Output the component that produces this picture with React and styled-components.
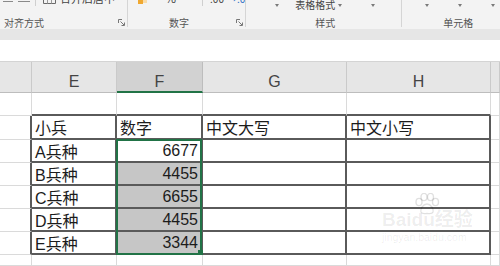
import React from 'react';
import styled, { createGlobalStyle } from 'styled-components';

const GlobalStyle = createGlobalStyle`
  html, body { margin: 0; padding: 0; background: #fff; }
  body { font-family: "Liberation Sans", "Noto Sans CJK SC", sans-serif; }
  #root { width: 500px; height: 266px; }
`;

const COLS = '32px 85px 86px 144px 144px 9px';
const GREEN = '#217346';
const DARK = '2px solid #5a5a5a';
const LIGHT = '1px solid #dadada';

const Page = styled.div`
  position: relative;
  width: 500px;
  height: 266px;
  overflow: hidden;
  display: flex;
  flex-direction: column;
  background: #fff;
`;

/* ---------- ribbon ---------- */
const Ribbon = styled.div`
  flex: 0 0 29px;
  display: flex;
  background: #f3f3f3;
  overflow: hidden;
`;

const Group = styled.div`
  flex: 0 0 ${p => p.$w}px;
  box-sizing: border-box;
  height: 27px;
  border-right: ${p => (p.$sep ? '1px solid #d5d5d5' : 'none')};
  display: flex;
  flex-direction: column;
`;

const TopRow = styled.div`
  flex: 0 0 12px;
  display: flex;
  align-items: flex-start;
  overflow: hidden;
  color: #444;
  font-family: "Noto Sans CJK SC", sans-serif;
`;

const Dash = styled.div`
  flex: 0 0 ${p => p.$w}px;
  height: 1px;
  margin: 1px 0 0 ${p => p.$ml}px;
  background: #8a8a8a;
`;

const VSep = styled.div`
  flex: 0 0 1px;
  height: 6px;
  margin-left: ${p => p.$ml}px;
  background: #cfcfcf;
`;

const Glyph = styled.svg`
  flex: 0 0 auto;
  margin: ${p => p.$mt || 0}px 0 0 ${p => p.$ml}px;
`;

const CutText = styled.span`
  flex: 0 0 auto;
  display: flex;
  align-items: center;
  gap: 3px;
  margin: ${p => p.$mt}px 0 0 ${p => p.$ml}px;
  font-size: ${p => p.$fs || 10}px;
  line-height: 12px;
  white-space: nowrap;
  color: #444;
`;

const Blue = styled.span`
  color: #2e6fc4;
`;

const Caret = styled.span`
  flex: 0 0 auto;
  width: 0;
  height: 0;
  margin: ${p => p.$mt ?? 4}px 0 0 ${p => p.$ml || 0}px;
  border-left: 2.5px solid transparent;
  border-right: 2.5px solid transparent;
  border-top: 3px solid #7a7a7a;
`;

const LabelRow = styled.div`
  flex: 1;
  display: flex;
  align-items: center;
  padding: 3px 2px 0 ${p => p.$pl}px;
  font-family: "Noto Sans CJK SC", sans-serif;
  font-size: 10px;
  color: #555;
  white-space: nowrap;
`;

const Launcher = styled.svg`
  margin-left: auto;
  flex: 0 0 auto;
`;

const LauncherIcon = () => (
  <Launcher width="7" height="7" viewBox="0 0 7 7">
    <path d="M0.5 4 V0.5 H4" fill="none" stroke="#777" strokeWidth="1" />
    <path d="M2.5 2.5 L6 6" stroke="#777" strokeWidth="1" />
    <path d="M3.5 6.5 H6.5 V3.5" fill="none" stroke="#777" strokeWidth="1" />
  </Launcher>
);

const Band = styled.div`
  flex: 0 0 11px;
  background: #e6e6e6;
`;

const FormulaBar = styled.div`
  flex: 0 0 21px;
  background: #fff;
  border-bottom: 1px solid #d4d4d4;
`;

/* ---------- sheet ---------- */
const HeaderRow = styled.div`
  flex: 0 0 30px;
  display: grid;
  grid-template-columns: ${COLS};
`;

const HeadCell = styled.div`
  box-sizing: border-box;
  background: ${p => (p.$sel ? '#d2d2d2' : '#e6e6e6')};
  border-right: 1px solid ${p => (p.$sel ? '#bdbdbd' : '#cacaca')};
  border-bottom: ${p => (p.$sel ? `2px solid ${GREEN}` : '1px solid #bdbdbd')};
  display: flex;
  justify-content: center;
  padding-top: 11px;
  font-size: 16px;
  line-height: 18px;
  color: #444;
  overflow: hidden;
`;

const Sheet = styled.div`
  flex: 1;
  display: grid;
  grid-template-columns: ${COLS};
  grid-template-rows: 23px 24px 23px 23px 23px 23px 23px 1fr;
`;

const Cell = styled.div`
  grid-row: ${p => p.$r};
  grid-column: ${p => p.$c};
  box-sizing: border-box;
  border-right: ${p => (p.$rDark ? DARK : LIGHT)};
  border-bottom: ${p => (p.$bDark ? DARK : LIGHT)};
  background: ${p => (p.$sel ? '#c6c6c6' : '#fff')};
  display: flex;
  align-items: center;
  justify-content: ${p => (p.$num ? 'flex-end' : 'flex-start')};
  padding: ${p => (p.$num ? '0 3px 0 0' : '0 0 0 3px')};
  font-size: 16px;
  color: #1c1c1c;
  white-space: nowrap;
  overflow: hidden;
`;

const Selection = styled.div`
  grid-row: 3 / 8;
  grid-column: 3;
  margin: -1px 1px 0 -1px;
  border: 2px solid ${GREEN};
  position: relative;
  z-index: 2;
  pointer-events: none;
`;

const FillHandle = styled.div`
  position: absolute;
  right: -3px;
  bottom: -2px;
  width: 5px;
  height: 5px;
  background: ${GREEN};
`;

/* ---------- watermark ---------- */
const Watermark = styled.div`
  position: absolute;
  left: 382px;
  top: 196px;
  z-index: 3;
  pointer-events: none;
  color: rgba(0, 0, 0, 0.08);
  display: flex;
  flex-direction: column;
  align-items: flex-start;
`;

const WmTitle = styled.div`
  position: relative;
  display: flex;
  align-items: flex-end;
  margin-top: 14px;
  font-family: "Liberation Sans", "Noto Sans CJK SC", sans-serif;
  font-size: 19px;
  font-weight: bold;
  line-height: 20px;
`;

const Paw = styled.svg`
  position: absolute;
  left: 32px;
  top: -17px;
`;

const WmSub = styled.div`
  font-size: 10.5px;
  line-height: 12px;
  margin-top: 1px;
  font-family: "Liberation Sans", sans-serif;
`;

const COL_LETTERS = ['', 'E', 'F', 'G', 'H', ''];

const ROWS = [
  null,
  ['小兵', '数字', '中文大写', '中文小写'],
  ['A兵种', 6677],
  ['B兵种', 4455],
  ['C兵种', 6655],
  ['D兵种', 4455],
  ['E兵种', 3344],
  'tail',
];

function buildCells() {
  const cells = [];
  ROWS.forEach((row, i) => {
    const r = i + 1;
    const inTable = i >= 1 && i <= 6;
    for (let c = 1; c <= 6; c++) {
      const tableCol = c >= 2 && c <= 5;
      let content = null;
      let num = false;
      if (Array.isArray(row) && tableCol) {
        const v = row[c - 2];
        if (v !== undefined) {
          content = v;
          num = typeof v === 'number';
        }
      }
      cells.push(
        <Cell
          key={`${r}-${c}`}
          $r={r}
          $c={c}
          $rDark={inTable && c <= 5}
          $bDark={(i === 0 || inTable) && tableCol}
          $sel={c === 3 && i >= 3 && i <= 6}
          $num={num}
        >
          {content}
        </Cell>
      );
    }
  });
  return cells;
}

export default function App() {
  return (
    <Page>
      <GlobalStyle />
      <Ribbon>
        <Group $w={128} $sep>
          <TopRow>
            <Dash $w={10} $ml={3} />
            <Dash $w={12} $ml={5} />
            <VSep $ml={5} />
            <Glyph $ml={7} width="13" height="5" viewBox="0 0 13 5">
              <path d="M0.5 0 V3.5 H12.5 V0" fill="none" stroke="#6b6b6b" />
              <path d="M4.5 0 V3.5 M8.5 0 V3.5" stroke="#9a9a9a" />
            </Glyph>
            <CutText $ml={4} $mt={-8} $fs={11}>
              合并后居中 <Caret $mt={0} />
            </CutText>
          </TopRow>
          <LabelRow $pl={4}>
            对齐方式
            <LauncherIcon />
          </LabelRow>
        </Group>
        <Group $w={115} $sep>
          <TopRow>
            <Glyph $ml={10} width="9" height="4" viewBox="0 0 9 4">
              <rect x="0" y="0" width="5" height="4" fill="#f0a830" />
              <rect x="5" y="0" width="4" height="3" fill="#f8dcaa" />
            </Glyph>
            <CutText $ml={18} $mt={-8} $fs={12}>%</CutText>
            <VSep $ml={26} />
            <CutText $ml={7} $mt={-7} $fs={10}>
              <span>.00</span>
              <Blue>→.0</Blue>
            </CutText>
          </TopRow>
          <LabelRow $pl={41}>
            数字
            <LauncherIcon />
          </LabelRow>
        </Group>
        <Group $w={156} $sep>
          <TopRow>
            <Caret $ml={29} />
            <CutText $ml={16} $mt={-1} $fs={10}>
              表格格式 <Caret $mt={0} />
            </CutText>
            <Caret $ml={29} />
          </TopRow>
          <LabelRow $pl={69}>样式</LabelRow>
        </Group>
        <Group $w={101}>
          <TopRow>
            <Caret $ml={23} />
            <Caret $ml={29} />
            <Caret $ml={29} />
          </TopRow>
          <LabelRow $pl={41}>单元格</LabelRow>
        </Group>
      </Ribbon>
      <Band />
      <FormulaBar />
      <HeaderRow>
        {COL_LETTERS.map((l, i) => (
          <HeadCell key={i} $sel={l === 'F'}>
            {l}
          </HeadCell>
        ))}
      </HeaderRow>
      <Sheet>
        {buildCells()}
        <Selection>
          <FillHandle />
        </Selection>
      </Sheet>
      <Watermark>
        <WmTitle>
          <Paw width="26" height="22" viewBox="0 0 26 22">
            <g fill="none" stroke="rgba(0,0,0,0.12)" strokeWidth="1.4">
              <ellipse cx="5" cy="9" rx="3" ry="3.6" />
              <ellipse cx="10" cy="4" rx="3" ry="3.6" />
              <ellipse cx="16.5" cy="4" rx="3" ry="3.6" />
              <ellipse cx="21.5" cy="9" rx="3" ry="3.6" />
              <path d="M13 11 C9 11 6 16 7 19 C8 21.5 11 20.5 13 20.5 C15 20.5 18 21.5 19 19 C20 16 17 11 13 11 Z" />
            </g>
          </Paw>
          <span>Bai</span>
          <span>du</span>
          <span>经验</span>
        </WmTitle>
        <WmSub>jingyan.baidu.com</WmSub>
      </Watermark>
    </Page>
  );
}
